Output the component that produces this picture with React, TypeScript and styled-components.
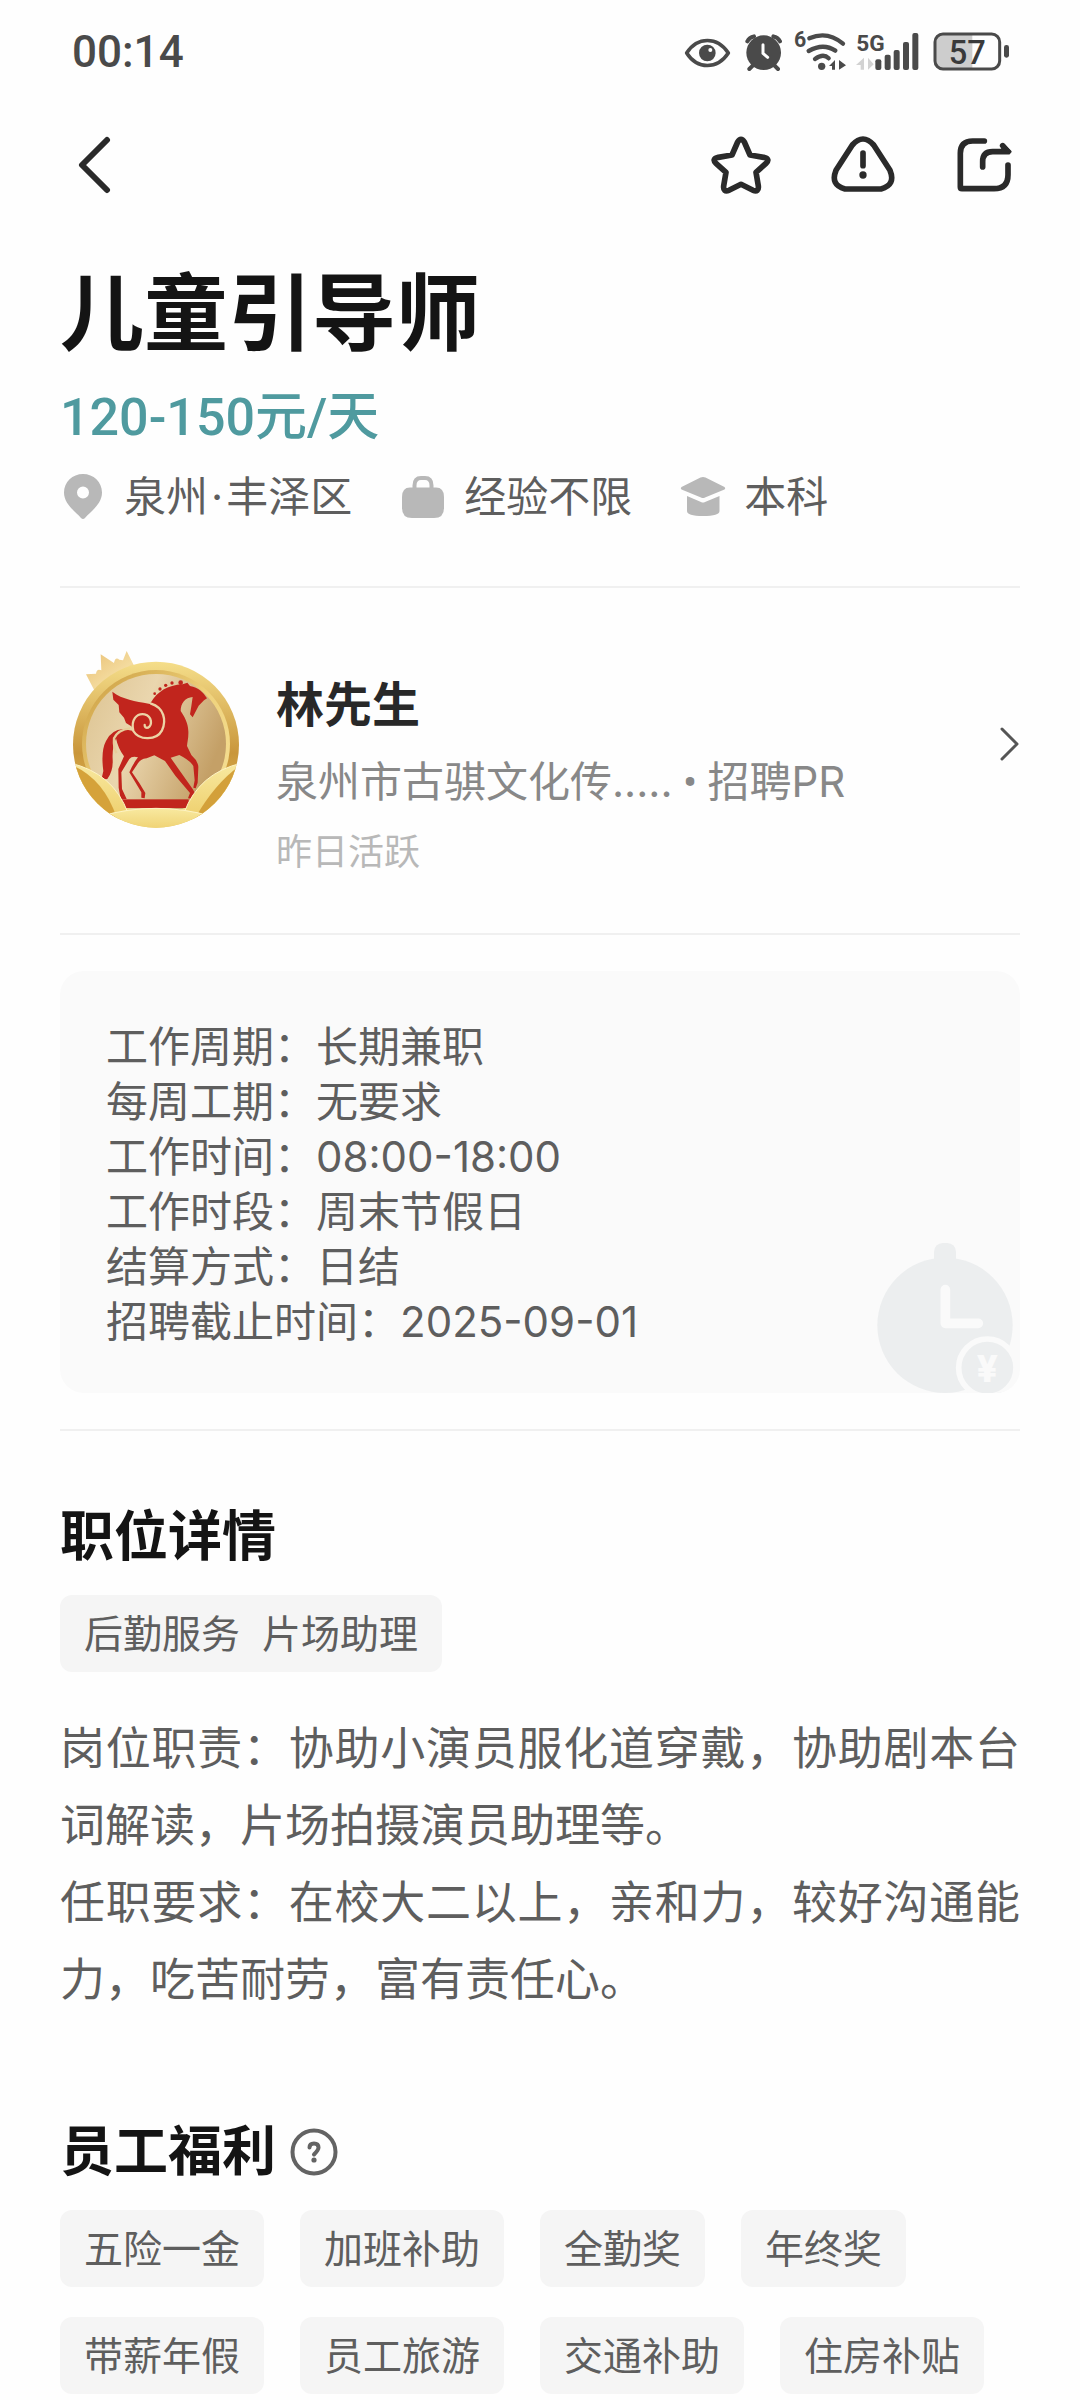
import React from "react";
import styled, { createGlobalStyle } from "styled-components";

const GlobalStyle = createGlobalStyle`
  * { box-sizing: border-box; }
  body {
    margin: 0;
    background: #fefefe;
    color: #5e5e5e;
    font-family: Inter, "Noto Sans CJK SC", sans-serif;
  }
  h1, h2, p, ul, dl, dd, dt { margin: 0; padding: 0; font-weight: 400; }
  svg { display: block; flex: none; }
`;

const StatusBar = styled.div`
  display: flex;
  align-items: center;
  justify-content: space-between;
  height: 104px;
  padding: 0 68px 0 72px;
  color: #4a4a4a;
`;

const Clock = styled.time`
  font-family: Roboto, sans-serif;
  font-size: 44px;
  font-weight: 500;
  line-height: 50px;
`;

const StatusIcons = styled.div`
  display: flex;
  align-items: center;
`;

const Toolbar = styled.header`
  display: flex;
  align-items: center;
  justify-content: space-between;
  height: 122px;
  padding: 0 60px;
`;

const ToolbarActions = styled.div`
  display: flex;
  gap: 52px;
`;

const IconButton = styled.button`
  display: flex;
  align-items: center;
  justify-content: center;
  width: 70px;
  height: 70px;
  padding: 0;
  border: 0;
  background: none;
  color: #2a2a2a;
`;

const Page = styled.main`
  padding: 38px 60px 6px;
`;

const JobTitle = styled.h1`
  color: #141414;
  font-size: 84px;
  font-weight: 700;
  line-height: 100px;
`;

const Salary = styled.p`
  margin-top: 24px;
  color: #4f9a9f;
  font-family: Roboto, "Noto Sans CJK SC", sans-serif;
  font-size: 52px;
  font-weight: 500;
  line-height: 60px;
`;

const MetaList = styled.ul`
  display: flex;
  gap: 48px;
  margin-top: 24px;
  padding-bottom: 64px;
  border-bottom: 2px solid #f0f0f0;
  list-style: none;
`;

const MetaItem = styled.li`
  display: flex;
  align-items: center;
  gap: 18px;
  font-size: 42px;
  line-height: 50px;
`;

const MiddleDot = styled.span`
  padding: 0 3px;
`;

const Recruiter = styled.a`
  display: flex;
  gap: 24px;
  padding: 60px 0 56px;
  border-bottom: 2px solid #f0f0f0;
  color: #888;
  text-decoration: none;
`;

const RecruiterInfo = styled.div`
  display: flex;
  flex: 1;
  flex-direction: column;
  gap: 14px;
  padding-top: 24px;
`;

const RecruiterName = styled.strong`
  color: #282828;
  font-size: 48px;
  font-weight: 700;
  line-height: 66px;
`;

const RecruiterCompany = styled.span`
  font-size: 42px;
  line-height: 60px;
`;

const Bullet = styled.span`
  font-family: Roboto, sans-serif;
`;

const RecruiterStatus = styled.span`
  color: #b8b8b8;
  font-size: 36px;
  line-height: 50px;
`;

const ChevronBox = styled.span`
  display: flex;
  align-items: center;
  height: 192px;
`;

const ScheduleSection = styled.section`
  position: relative;
  padding: 36px 0;
  border-bottom: 2px solid #f0f0f0;
`;

const ScheduleCard = styled.div`
  position: relative;
  overflow: hidden;
  padding: 48px 46px 44px;
  border-radius: 24px;
  background: #fafafa;
`;

const ScheduleList = styled.dl`
  font-size: 42px;
  line-height: 55px;
`;

const ScheduleRow = styled.div`
  display: flex;
`;

const Watermark = styled.div`
  position: absolute;
  right: 0;
  bottom: 0;
`;

const Section = styled.section<{ $top: number }>`
  padding-top: ${(p) => p.$top}px;
`;

const SectionHead = styled.div`
  display: flex;
  align-items: center;
  gap: 14px;
`;

const SectionTitle = styled.h2`
  color: #141414;
  font-size: 54px;
  font-weight: 700;
  line-height: 72px;
`;

const HelpButton = styled.button`
  display: flex;
  padding: 0;
  border: 0;
  background: none;
`;

const TagList = styled.ul`
  display: flex;
  flex-wrap: wrap;
  gap: 30px 36px;
  margin-top: 22px;
  list-style: none;
`;

const Tag = styled.li`
  display: flex;
  gap: 22px;
  padding: 0 24px;
  border-radius: 12px;
  background: #f5f5f5;
  font-size: 39px;
  line-height: 77px;
`;

const Description = styled.div`
  margin-top: 38px;
  font-size: 45px;
  line-height: 77px;
  text-align: justify;
`;

const SystemIcons = () => (
  <svg width="328" height="50" viewBox="0 0 984 150" fill="none" stroke="#4a4a4a" strokeLinecap="round" aria-hidden="true">
    <g transform="translate(-72 -48)">
      <path d="M80 126C112 76 172 76 205 126C172 176 112 176 80 126Z" strokeWidth="11" strokeLinejoin="round" />
      <circle cx="142" cy="126" r="25" fill="#4a4a4a" stroke="none" />
      <circle cx="151" cy="117" r="6" fill="#fefefe" stroke="none" />
      <circle cx="311" cy="125" r="52" fill="#4a4a4a" stroke="none" />
      <path d="M262 91Q268 79 282 76M360 91Q354 79 340 76" strokeWidth="12" />
      <path d="M279 163L268 174M343 163L354 174" strokeWidth="12" />
      <path d="M309 101V127L323 139" stroke="#fefefe" strokeWidth="9" />
      <text x="402" y="108" fill="#4a4a4a" stroke="none" fontFamily="Roboto, sans-serif" fontSize="64" fontWeight="700">6</text>
      <path d="M448 82Q502 58 549 98M446 120Q490 95 526 119M465 144Q490 126 506 142" strokeWidth="13" />
      <circle cx="485" cy="166" r="11" fill="#4a4a4a" stroke="none" />
      <path d="M525 147V176H516V165H507ZM537 147V176L558 163Z" fill="#4a4a4a" stroke="none" />
      <text x="589" y="120" fill="#4a4a4a" stroke="none" fontFamily="Roboto, sans-serif" fontSize="68" fontWeight="700">5G</text>
      <path d="M612 140V176H602V162H588ZM624 140V176L641 160Z" fill="#d2d2d2" stroke="none" />
      <g fill="#4a4a4a" stroke="none">
        <rect x="646" y="145" width="18" height="32" rx="6" />
        <rect x="674" y="131" width="18" height="46" rx="6" />
        <rect x="701" y="117" width="18" height="60" rx="6" />
        <rect x="729" y="93" width="18" height="84" rx="6" />
        <rect x="757" y="66" width="18" height="111" rx="6" />
        <rect x="1032" y="102" width="15" height="38" rx="7" />
      </g>
      <path d="M850 72H937V172H850Q828 172 828 150V94Q828 72 850 72Z" fill="#cdcdcd" stroke="none" />
      <rect x="825" y="69" width="194" height="105" rx="24" strokeWidth="9" />
      <text x="922" y="158" fill="#3a3a3a" stroke="none" textAnchor="middle" fontFamily="Roboto, sans-serif" fontSize="98" fontWeight="500">57</text>
    </g>
  </svg>
);

const BackIcon = () => (
  <svg width="34" height="60" viewBox="0 0 34 60" fill="none" stroke="currentColor" strokeWidth="6" strokeLinecap="round" strokeLinejoin="round">
    <path d="M29 5L4 30L29 55" />
  </svg>
);

const StarIcon = () => (
  <svg width="64" height="60" viewBox="0 0 192 180" fill="none" stroke="currentColor" strokeWidth="17" strokeLinejoin="round">
    <path d="M86 21Q96 5 106 21L123 60L164 67Q185 72 171 85L141 112L148 153Q150 172 132 166L96 148L60 166Q42 172 44 153L51 112L21 85Q7 72 28 67L69 60Z" />
  </svg>
);

const ReportIcon = () => (
  <svg width="64" height="60" viewBox="0 0 192 180" fill="none" stroke="currentColor" strokeWidth="17" strokeLinecap="round" strokeLinejoin="round">
    <path d="M64 30Q96 -6 128 30L177 106Q195 150 150 162H42Q-3 150 15 106Z" />
    <path d="M96 54V92" />
    <circle cx="96" cy="120" r="11" fill="currentColor" stroke="none" />
  </svg>
);

const ShareIcon = () => (
  <svg width="60" height="60" viewBox="4 0 180 180" fill="none" stroke="currentColor" strokeWidth="17" strokeLinecap="round" strokeLinejoin="round">
    <path d="M92 18H57Q20 18 20 55V156Q20 161 25 161H121Q163 161 163 119V90" />
    <path d="M87 96V80Q87 50 117 50H163L147 32" />
    <path d="M147 29L170 50H147Z" fill="currentColor" strokeWidth="8" />
  </svg>
);

const PinIcon = () => (
  <svg width="46" height="48" viewBox="0 0 46 48" fill="#b8b8b8">
    <path fillRule="evenodd" d="M23 1C33.500 1 42 9 42 19.500C42 31 31 38 25 45Q23 47 21 45C15 38 4 31 4 19.500C4 9 12.500 1 23 1ZM23 13.500A6 6 0 1 0 23 25.500A6 6 0 1 0 23 13.500Z" />
  </svg>
);

const BagIcon = () => (
  <svg width="46" height="48" viewBox="0 0 46 48">
    <path d="M14.500 18V12.500Q14.500 5 21 5H25Q31.500 5 31.500 12.500V18" fill="none" stroke="#b8b8b8" strokeWidth="4" />
    <path d="M10 14.500H36Q44 14.500 44 24V35Q44 45 34 45H12Q2 45 2 35V24Q2 14.500 10 14.500Z" fill="#b8b8b8" />
  </svg>
);

const DegreeIcon = () => (
  <svg width="46" height="48" viewBox="0 0 46 48" fill="#b8b8b8">
    <path d="M20.500 4.500Q23 3.500 25.500 4.500L44.500 14Q46 15 44.500 16.500L25 24.500Q23 25.500 21 24.500L1.500 16.500Q0 15 1.500 14Z" />
    <path d="M7 23L21 29Q23 30 25 29L39.500 23V38Q39.500 43 23 43Q7 43 7 38Z" />
  </svg>
);

const ChevronIcon = () => (
  <svg width="22" height="36" viewBox="0 0 22 36" fill="none" stroke="#555" strokeWidth="3" strokeLinecap="round" strokeLinejoin="round">
    <path d="M4 3L19 18L4 33" />
  </svg>
);

const HelpIcon = () => (
  <svg width="48" height="48" viewBox="0 0 48 48" fill="none" stroke="#636363" strokeWidth="4" strokeLinecap="round">
    <circle cx="24" cy="24" r="21.500" />
    <path d="M19.500 19.500Q19.500 15.500 24 15.500Q28.500 15.500 28.500 19.500Q28.500 22 24 26.500" />
    <circle cx="24" cy="32" r="2.600" fill="#636363" stroke="none" />
  </svg>
);

const StopwatchIcon = () => (
  <svg width="150" height="152" viewBox="90 92 450 456" aria-hidden="true">
    <rect x="282" y="98" width="66" height="90" rx="26" fill="#eceeef" />
    <circle cx="315" cy="345" r="203" fill="#eceeef" />
    <path d="M316 238V339H415" fill="none" stroke="#fafafa" strokeWidth="29" strokeLinecap="round" strokeLinejoin="round" />
    <circle cx="442" cy="472" r="86" fill="#eceeef" stroke="#fafafa" strokeWidth="17" />
    <text x="442" y="516" fill="#fafafa" textAnchor="middle" fontFamily="Inter, sans-serif" fontSize="112" fontWeight="800">¥</text>
  </svg>
);

const Emblem = () => (
  <svg width="192" height="192" viewBox="30 51 576 576" role="img" aria-label="林先生">
    <defs>
      <linearGradient id="rim" x1="0" y1="0" x2="0" y2="1">
        <stop offset="0" stopColor="#f5de8a" />
        <stop offset="0.55" stopColor="#c9963b" />
        <stop offset="1" stopColor="#e8c860" />
      </linearGradient>
      <linearGradient id="inner" x1="0" y1="0" x2="1" y2="1">
        <stop offset="0" stopColor="#c99a3e" />
        <stop offset="0.5" stopColor="#efd27c" />
        <stop offset="1" stopColor="#f6e29a" />
      </linearGradient>
      <linearGradient id="ground" x1="0" y1="0" x2="1" y2="0.4">
        <stop offset="0" stopColor="#dcc391" />
        <stop offset="0.45" stopColor="#ead6ae" />
        <stop offset="1" stopColor="#c4a067" />
      </linearGradient>
      <linearGradient id="leaf" x1="0" y1="0" x2="0" y2="1">
        <stop offset="0" stopColor="#f8e9a0" />
        <stop offset="1" stopColor="#ecc961" />
      </linearGradient>
      <linearGradient id="crown" x1="0" y1="0" x2="1" y2="1">
        <stop offset="0" stopColor="#e9bf72" />
        <stop offset="0.6" stopColor="#f4dca0" />
        <stop offset="1" stopColor="#d9a651" />
      </linearGradient>
      <clipPath id="disc"><circle cx="318" cy="341" r="249" /></clipPath>
    </defs>
    <path d="M134 180L108 130L138 128Q140 112 154 118L152 70L192 96Q196 76 208 86L219 88L230 60L262 124Z" fill="url(#crown)" />
    <circle cx="318" cy="341" r="249" fill="url(#rim)" />
    <circle cx="318" cy="339" r="222" fill="url(#inner)" />
    <circle cx="318" cy="339" r="210" fill="url(#ground)" />
    <g fill="#c1251d">
      <path d="M303 214C322 182 352 163 398 160L412 155L420 165C446 170 460 184 471 202L462 208L446 224L428 259L420 250L424 226L428 198C406 200 392 216 392 240C404 258 414 276 415 300C416 320 412 334 411 345L424 372Q444 390 445 408L443 455L437 472L430 470L434 448L430 405Q420 388 388 372L362 380L384 412L428 474L436 488L430 504L414 502L420 486L376 434L345 390L313 373L290 382Q270 384 262 400L246 424L268 456L286 486L284 502L274 500L274 484L238 424Q248 400 264 379Q246 374 238 384L214 424L216 474L230 504H212L206 470L205 414L222 376Q204 352 198 322Q186 350 188 385Q190 420 172 444L154 446L160 420Q152 360 168 330Q184 296 220 294L250 300Z" />
      <path d="M187 182C218 206 256 210 296 218C336 224 350 256 342 290C330 326 262 330 244 286L228 276L222 260L208 244L206 222L190 206Z" />
      <circle cx="314" cy="188" r="4" />
      <circle cx="330" cy="174" r="5" />
      <circle cx="347" cy="163" r="5" />
      <circle cx="366" cy="156" r="5" />
      <circle cx="392" cy="155" r="7" />
      <rect x="212" y="505" width="204" height="26" />
    </g>
    <path d="M303 218C342 230 350 268 336 298C320 328 268 330 250 300C242 266 260 246 284 250C306 256 308 282 294 290Q284 292 284 282" fill="none" stroke="#ecd3a6" strokeWidth="7" strokeLinecap="round" />
    <path d="M240 292Q204 296 192 322Q190 352 200 366" fill="none" stroke="#e6cc9a" strokeWidth="7" />
    <g clipPath="url(#disc)">
      <path d="M60 396Q190 426 234 546L180 600L60 520Z" fill="url(#leaf)" stroke="#fdf3c4" strokeWidth="3" />
      <path d="M60 400Q160 440 200 560L60 560Z" fill="#d5a23a" />
      <path d="M576 396Q446 426 402 546L456 600L576 520Z" fill="url(#leaf)" stroke="#fdf3c4" strokeWidth="3" />
      <path d="M576 400Q500 450 436 560L576 560Z" fill="#d3a03a" />
      <path d="M150 556Q318 508 486 556V620H150Z" fill="url(#leaf)" stroke="#fdf3c4" strokeWidth="3" />
    </g>
  </svg>
);

const schedule = [
  ["工作周期：", "长期兼职"],
  ["每周工期：", "无要求"],
  ["工作时间：", "08:00-18:00"],
  ["工作时段：", "周末节假日"],
  ["结算方式：", "日结"],
  ["招聘截止时间：", "2025-09-01"],
];

const benefits = ["五险一金", "加班补助", "全勤奖", "年终奖", "带薪年假", "员工旅游", "交通补助", "住房补贴"];

export default function App() {
  return (
    <>
      <GlobalStyle />
      <StatusBar>
        <Clock>00:14</Clock>
        <StatusIcons><SystemIcons /></StatusIcons>
      </StatusBar>
      <Toolbar>
        <IconButton type="button" aria-label="返回"><BackIcon /></IconButton>
        <ToolbarActions>
          <IconButton type="button" aria-label="收藏"><StarIcon /></IconButton>
          <IconButton type="button" aria-label="举报"><ReportIcon /></IconButton>
          <IconButton type="button" aria-label="分享"><ShareIcon /></IconButton>
        </ToolbarActions>
      </Toolbar>
      <Page>
        <JobTitle>儿童引导师</JobTitle>
        <Salary>120-150元/天</Salary>
        <MetaList>
          <MetaItem><PinIcon /><span>泉州<MiddleDot>·</MiddleDot>丰泽区</span></MetaItem>
          <MetaItem><BagIcon /><span>经验不限</span></MetaItem>
          <MetaItem><DegreeIcon /><span>本科</span></MetaItem>
        </MetaList>
        <Recruiter href="#recruiter">
          <Emblem />
          <RecruiterInfo>
            <RecruiterName>林先生</RecruiterName>
            <RecruiterCompany>泉州市古骐文化传.....<Bullet> • </Bullet>招聘PR</RecruiterCompany>
            <RecruiterStatus>昨日活跃</RecruiterStatus>
          </RecruiterInfo>
          <ChevronBox><ChevronIcon /></ChevronBox>
        </Recruiter>
        <ScheduleSection>
          <ScheduleCard>
            <ScheduleList>
              {schedule.map(([label, value]) => (
                <ScheduleRow key={label}>
                  <dt>{label}</dt>
                  <dd>{value}</dd>
                </ScheduleRow>
              ))}
            </ScheduleList>
            <Watermark><StopwatchIcon /></Watermark>
          </ScheduleCard>
        </ScheduleSection>
        <Section $top={70}>
          <SectionTitle>职位详情</SectionTitle>
          <TagList>
            <Tag><span>后勤服务</span><span>片场助理</span></Tag>
          </TagList>
          <Description>
            <p>岗位职责：协助小演员服化道穿戴，协助剧本台词解读，片场拍摄演员助理等。</p>
            <p>任职要求：在校大二以上，亲和力，较好沟通能力，吃苦耐劳，富有责任心。</p>
          </Description>
        </Section>
        <Section $top={98}>
          <SectionHead>
            <SectionTitle>员工福利</SectionTitle>
            <HelpButton type="button" aria-label="福利说明"><HelpIcon /></HelpButton>
          </SectionHead>
          <TagList>
            {benefits.map((name) => <Tag key={name}>{name}</Tag>)}
          </TagList>
        </Section>
      </Page>
    </>
  );
}
